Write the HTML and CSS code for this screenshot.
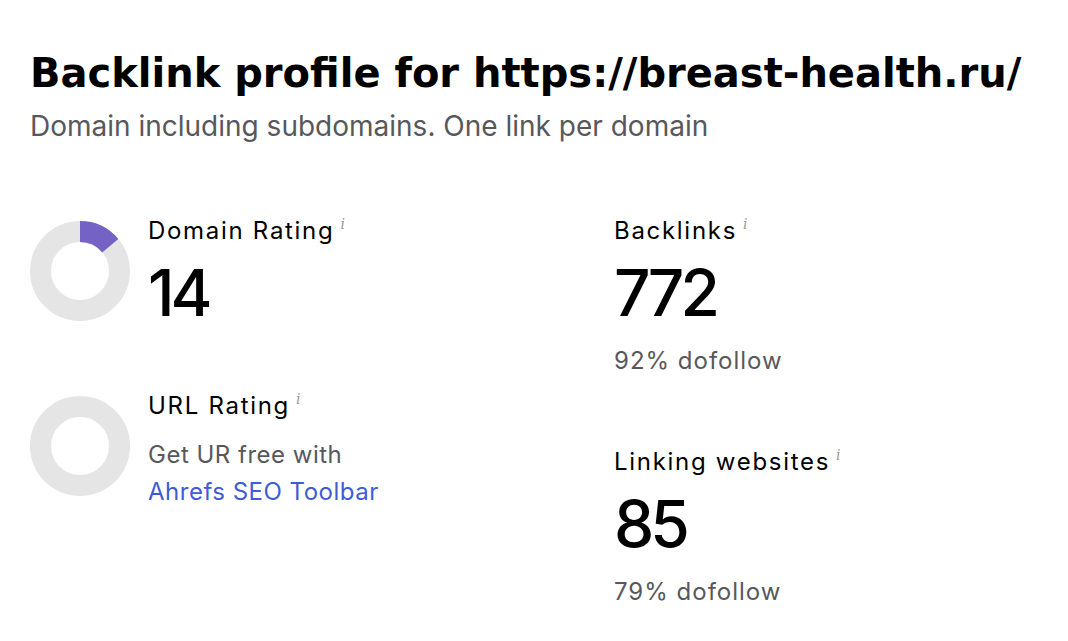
FILE: index.html
```html
<!DOCTYPE html>
<html>
<head>
<meta charset="utf-8">
<link rel="stylesheet" href="styles.css">
</head>
<body>
<div class="page">
  <h1 class="title">Backlink profile for https://breast-health.ru/</h1>
  <p class="subtitle">Domain including subdomains. One link per domain</p>
  <div class="grid">
    <div class="col">
      <div class="metric">
        <svg class="donut" width="100" height="100" viewBox="0 0 100 100">
          <circle cx="50" cy="50" r="39.5" fill="none" stroke="#e5e5e5" stroke-width="21"/>
          <path d="M50 0 A50 50 0 0 1 88.3 17.9 L72.2 31.4 A29 29 0 0 0 50 21 Z" fill="#7562c5"/>
        </svg>
        <div class="info">
          <div class="label">Domain Rating<span class="i">i</span></div>
          <div class="big">14</div>
        </div>
      </div>
      <div class="metric metric-ur">
        <svg class="donut" width="100" height="100" viewBox="0 0 100 100">
          <circle cx="50" cy="50" r="39.5" fill="none" stroke="#e5e5e5" stroke-width="21"/>
        </svg>
        <div class="info">
          <div class="label">URL Rating<span class="i">i</span></div>
          <div class="note">Get UR free with<br><a class="link" href="#">Ahrefs SEO Toolbar</a></div>
        </div>
      </div>
    </div>
    <div class="col col-right">
      <div class="stat">
        <div class="label">Backlinks<span class="i">i</span></div>
        <div class="big">772</div>
        <div class="sub">92% dofollow</div>
      </div>
      <div class="stat stat-2">
        <div class="label">Linking websites<span class="i">i</span></div>
        <div class="big">85</div>
        <div class="sub">79% dofollow</div>
      </div>
    </div>
  </div>
</div>
</body>
</html>
```

FILE: styles.css
```css
html, body {
  margin: 0;
  padding: 0;
  background: #fff;
}
.page {
  padding: 48px 0 0 30px;
  font-family: Inter, "Noto Sans", sans-serif;
  color: #000;
}
.title {
  margin: 0;
  font-family: "DejaVu Sans", sans-serif;
  font-weight: bold;
  font-size: 40px;
  line-height: 50px;
}
.subtitle {
  margin: 11px 0 0 0;
  font-size: 28px;
  line-height: 34px;
  color: #58585c;
}
.grid {
  display: grid;
  grid-template-columns: 584px 1fr;
  margin-top: 71px;
}
.metric {
  display: flex;
  gap: 18px;
}
.metric-ur {
  margin-top: 60px;
}
.donut {
  display: block;
  flex: none;
  margin-top: 7px;
}
.label {
  font-size: 24px;
  line-height: 34px;
  letter-spacing: 1.7px;
}
.i {
  font-family: "DejaVu Serif", serif;
  font-style: italic;
  font-size: 14px;
  letter-spacing: 0;
  color: #9a9a9a;
  vertical-align: top;
  margin-left: 6px;
  line-height: 20px;
}
.big {
  font-size: 64px;
  font-weight: 500;
  line-height: 72px;
  letter-spacing: -4px;
  margin-top: 9px;
}
.note {
  font-size: 24px;
  line-height: 37px;
  letter-spacing: 0.5px;
  color: #58585c;
  margin-top: 13px;
}
.link {
  color: #3f5bd8;
  text-decoration: none;
}
.sub {
  font-size: 24px;
  line-height: 34px;
  letter-spacing: 1px;
  color: #58585c;
  margin-top: 15px;
}
.stat-2 {
  margin-top: 67px;
}
```
